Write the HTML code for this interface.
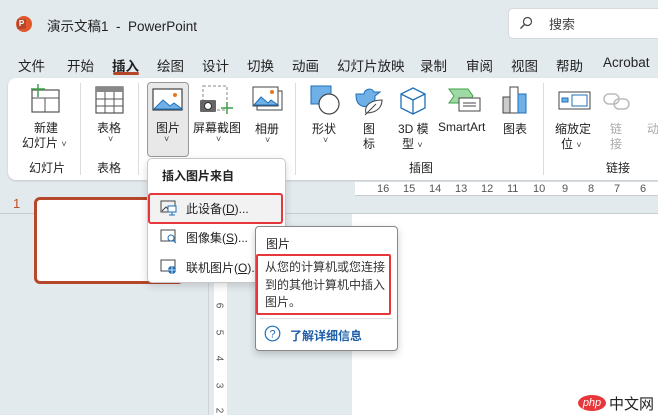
<!DOCTYPE html>
<html><head><meta charset="utf-8"><style>
*{margin:0;padding:0;box-sizing:border-box}
body{width:658px;height:415px;overflow:hidden;background:#e3eaee;font-family:"Liberation Sans","Noto Sans CJK SC",sans-serif;color:#222;position:relative}
.a{position:absolute;white-space:nowrap}
.t{font-size:13px}
.s{font-size:12px}
.sep{position:absolute;width:1px;background:#dcdcdc}
.chev{font-size:9px;color:#444}
.rn{position:absolute;top:0;font-size:11px;color:#555;line-height:14px}
</style></head><body>
<div class="a" style="left:16px;top:16px;width:16px;height:16px;border-radius:50%;background:#e2572c"></div>
<div class="a" style="left:17px;top:19px;width:9px;height:10px;background:#b7472a;border-radius:1px;color:#fff;font-size:8px;font-weight:bold;line-height:10px;text-align:center">P</div>
<div class="a t" style="left:47px;top:15px;font-size:13.5px">演示文稿1&nbsp; - &nbsp;PowerPoint</div>
<div class="a" style="left:508px;top:8px;width:160px;height:31px;background:#fff;border:1px solid #d6dadd;border-radius:5px"></div>
<svg class="a" style="left:519px;top:16px" width="14" height="14"><circle cx="8.5" cy="5.5" r="4" fill="none" stroke="#444" stroke-width="1.2"/><line x1="5.5" y1="8.5" x2="1.5" y2="12.5" stroke="#444" stroke-width="1.3"/></svg>
<div class="a t" style="left:549px;top:14px;color:#444">搜索</div>
<div class="a t" style="left:18px;top:55px;font-size:13.5px">文件</div>
<div class="a t" style="left:67px;top:55px;font-size:13.5px">开始</div>
<div class="a t" style="left:112px;top:55px;font-size:13.5px;font-weight:bold">插入</div>
<div class="a" style="left:113px;top:72px;width:26px;height:3px;background:#b7472a;border-radius:2px"></div>
<div class="a t" style="left:157px;top:55px;font-size:13.5px">绘图</div>
<div class="a t" style="left:202px;top:55px;font-size:13.5px">设计</div>
<div class="a t" style="left:247px;top:55px;font-size:13.5px">切换</div>
<div class="a t" style="left:292px;top:55px;font-size:13.5px">动画</div>
<div class="a t" style="left:337px;top:55px;font-size:13.5px">幻灯片放映</div>
<div class="a t" style="left:420px;top:55px;font-size:13.5px">录制</div>
<div class="a t" style="left:466px;top:55px;font-size:13.5px">审阅</div>
<div class="a t" style="left:511px;top:55px;font-size:13.5px">视图</div>
<div class="a t" style="left:556px;top:55px;font-size:13.5px">帮助</div>
<div class="a t" style="left:603px;top:55px;font-size:13.5px">Acrobat</div>
<div class="a" style="left:8px;top:78px;width:660px;height:102px;background:#fff;border-radius:8px;box-shadow:0 1px 2px rgba(0,0,0,.15)"></div>
<div class="sep" style="left:80px;top:83px;height:92px"></div>
<div class="sep" style="left:138px;top:83px;height:92px"></div>
<div class="sep" style="left:295px;top:83px;height:92px"></div>
<div class="sep" style="left:543px;top:83px;height:92px"></div>
<svg class="a" style="left:28px;top:84px" width="34" height="30"><rect x="4" y="6" width="27" height="22" fill="#fff" stroke="#555" stroke-width="1.2"/><line x1="4" y1="14" x2="31" y2="14" stroke="#555"/><line x1="17" y1="14" x2="17" y2="28" stroke="#555"/><line x1="3" y1="5" x2="17" y2="5" stroke="#3fa14a" stroke-width="1.5"/><line x1="10" y1="-1" x2="10" y2="13" stroke="#3fa14a" stroke-width="1.5"/></svg>
<div class="a s" style="left:34px;top:119px">新建</div>
<div class="a s" style="left:22px;top:134px">幻灯片 <span class="chev">˅</span></div>
<div class="a s" style="left:29px;top:159px">幻灯片</div>
<svg class="a" style="left:94px;top:85px" width="32" height="30"><rect x="2" y="2" width="27" height="26" fill="#fff" stroke="#555" stroke-width="1.2"/><rect x="2" y="2" width="27" height="5" fill="#888"/><path d="M2 14H29M2 21H29M11 7V28M20 7V28" stroke="#555"/></svg>
<div class="a s" style="left:97px;top:119px">表格</div>
<div class="a chev" style="left:108px;top:134px">˅</div>
<div class="a s" style="left:97px;top:159px">表格</div>
<div class="a" style="left:147px;top:82px;width:42px;height:75px;background:#e8e8e8;border:1px solid #999;border-radius:4px"></div>
<svg class="a" style="left:152px;top:88px" width="32" height="24"><rect x="1" y="1" width="29" height="21" fill="#fff" stroke="#444" stroke-width="1.2"/><path d="M2 21L11 12L18 18L22 15L30 21Z" fill="#6fb0e6" stroke="#1e6fb8"/><circle cx="23" cy="7" r="2" fill="#e8761d"/></svg>
<div class="a s" style="left:156px;top:119px">图片</div>
<div class="a chev" style="left:164px;top:134px">˅</div>
<svg class="a" style="left:199px;top:84px" width="36" height="34"><rect x="4" y="2" width="24" height="24" fill="none" stroke="#888" stroke-dasharray="3,2"/><rect x="1" y="16" width="16" height="12" fill="#666" rx="1"/><circle cx="9" cy="22" r="3.5" fill="#fff" stroke="#333"/><path d="M22 24H34M28 18V30" stroke="#3fa14a" stroke-width="1.5"/></svg>
<div class="a s" style="left:193px;top:119px">屏幕截图</div>
<div class="a chev" style="left:216px;top:134px">˅</div>
<svg class="a" style="left:252px;top:86px" width="32" height="26"><rect x="5" y="5" width="25" height="19" fill="#fff" stroke="#444"/><rect x="1" y="1" width="25" height="19" fill="#fff" stroke="#444"/><path d="M2 19L9 11L16 17L19 14L26 19Z" fill="#6fb0e6" stroke="#1e6fb8"/><circle cx="20" cy="6" r="2" fill="#e8761d"/></svg>
<div class="a s" style="left:255px;top:120px">相册</div>
<div class="a chev" style="left:265px;top:135px">˅</div>
<svg class="a" style="left:310px;top:85px" width="32" height="30"><rect x="1" y="1" width="20" height="18" fill="#6fb0e6" stroke="#1e6fb8"/><circle cx="19" cy="19" r="10" fill="#fff" stroke="#444" stroke-width="1.2"/></svg>
<div class="a s" style="left:312px;top:120px">形状</div>
<div class="a chev" style="left:323px;top:135px">˅</div>
<svg class="a" style="left:354px;top:86px" width="32" height="30"><path d="M2 8H10C10 3 18 1 20 6L26 6L21 10C22 18 14 22 8 20C3 18 2 14 2 8Z" fill="#6fb0e6" stroke="#1e6fb8"/><path d="M12 27C10 20 16 14 28 14C28 22 22 27 12 27Z" fill="#fff" stroke="#444"/><path d="M11 29L22 18" stroke="#444"/></svg>
<div class="a s" style="left:363px;top:120px">图</div>
<div class="a s" style="left:363px;top:135px">标</div>
<svg class="a" style="left:399px;top:86px" width="28" height="30"><path d="M14 2L26 8V22L14 28L2 22V8Z" fill="#fff" stroke="#1e6fb8" stroke-width="1.3"/><path d="M2 8L14 14L26 8M14 14V28" fill="none" stroke="#1e6fb8" stroke-width="1.3"/></svg>
<div class="a s" style="left:398px;top:120px">3D 模</div>
<div class="a s" style="left:402px;top:135px">型 <span class="chev">˅</span></div>
<svg class="a" style="left:448px;top:88px" width="34" height="26"><path d="M1 1H20L25 8L20 15H1L6 8Z" fill="#9fd9a4" stroke="#3fa14a"/><rect x="11" y="10" width="21" height="13" fill="#fff" stroke="#444"/><path d="M15 15H28M15 18H28" stroke="#444"/></svg>
<div class="a s" style="left:438px;top:120px">SmartArt</div>
<svg class="a" style="left:501px;top:85px" width="28" height="30"><rect x="2" y="12" width="7" height="16" fill="#ccc" stroke="#444"/><rect x="9" y="2" width="8" height="26" fill="#fff" stroke="#444"/><rect x="17" y="9" width="8" height="19" fill="#6fb0e6" stroke="#1e6fb8"/></svg>
<div class="a s" style="left:503px;top:120px">图表</div>
<div class="a s" style="left:409px;top:159px">插图</div>
<svg class="a" style="left:558px;top:89px" width="34" height="22"><rect x="1" y="3" width="31" height="17" fill="#fff" stroke="#444"/><rect x="14" y="6" width="15" height="11" fill="#fff" stroke="#1e6fb8"/><rect x="4" y="9" width="6" height="4" fill="#6fb0e6" stroke="#1e6fb8"/></svg>
<div class="a s" style="left:555px;top:120px">缩放定</div>
<div class="a s" style="left:561px;top:135px">位 <span class="chev">˅</span></div>
<svg class="a" style="left:602px;top:90px" width="30" height="22"><rect x="2" y="4" width="15" height="10" rx="5" fill="none" stroke="#bbb" stroke-width="1.5"/><rect x="12" y="9" width="15" height="10" rx="5" fill="none" stroke="#bbb" stroke-width="1.5"/></svg>
<div class="a s" style="left:610px;top:120px;color:#aaa">链</div>
<div class="a s" style="left:610px;top:135px;color:#aaa">接</div>
<div class="a s" style="left:647px;top:120px;color:#aaa">动</div>
<div class="a s" style="left:606px;top:159px">链接</div>
<div class="a" style="left:355px;top:182px;width:310px;height:14px;background:#fff;border-bottom:1px solid #ccc">
<span class="rn" style="left:22px">16</span><span class="rn" style="left:48px">15</span><span class="rn" style="left:74px">14</span><span class="rn" style="left:100px">13</span><span class="rn" style="left:126px">12</span><span class="rn" style="left:152px">11</span><span class="rn" style="left:178px">10</span><span class="rn" style="left:207px">9</span><span class="rn" style="left:233px">8</span><span class="rn" style="left:259px">7</span><span class="rn" style="left:285px">6</span>
</div>
<div class="a" style="left:0;top:213px;width:658px;height:1px;background:#c8ccd0"></div>
<div class="a" style="left:352px;top:214px;width:306px;height:201px;background:#fff"></div>
<div class="a" style="left:208px;top:214px;width:1px;height:201px;background:#cfd4d8"></div>
<div class="a" style="left:214px;top:282px;width:13px;height:133px;background:#fff"></div>
<div class="a" style="left:216px;top:300px;font-size:10px;color:#555;transform:rotate(90deg)">6</div>
<div class="a" style="left:216px;top:327px;font-size:10px;color:#555;transform:rotate(90deg)">5</div>
<div class="a" style="left:216px;top:353px;font-size:10px;color:#555;transform:rotate(90deg)">4</div>
<div class="a" style="left:216px;top:380px;font-size:10px;color:#555;transform:rotate(90deg)">3</div>
<div class="a" style="left:216px;top:405px;font-size:10px;color:#555;transform:rotate(90deg)">2</div>
<div class="a" style="left:13px;top:196px;color:#c0502a;font-size:13px">1</div>
<div class="a" style="left:34px;top:197px;width:150px;height:87px;background:#fff;border:3px solid #b7472a;border-radius:6px"></div>
<div class="a" style="left:147px;top:158px;width:139px;height:125px;background:#fff;border:1px solid #c8c8c8;border-radius:5px;box-shadow:0 3px 8px rgba(0,0,0,.15)"></div>
<div class="a s" style="left:162px;top:167px;font-weight:bold">插入图片来自</div>
<div class="a" style="left:148px;top:193px;width:135px;height:31px;background:#f2f2f2;border:2px solid #e8373a;border-radius:3px"></div>
<svg class="a" style="left:160px;top:200px" width="18" height="16"><rect x="1" y="1" width="14" height="11" fill="none" stroke="#444"/><path d="M2 11L6 7L9 10" fill="none" stroke="#444"/><rect x="8" y="6" width="8" height="6" fill="#fff" stroke="#1e6fb8"/><path d="M12 12V15M9 15H15" stroke="#1e6fb8"/></svg>
<div class="a s" style="left:186px;top:200px">此设备(<u>D</u>)...</div>
<svg class="a" style="left:160px;top:229px" width="18" height="16"><rect x="1" y="1" width="14" height="11" fill="none" stroke="#444"/><circle cx="11" cy="9" r="3" fill="#fff" stroke="#1e6fb8"/><path d="M13 11L16 14" stroke="#1e6fb8"/></svg>
<div class="a s" style="left:186px;top:229px">图像集(<u>S</u>)...</div>
<svg class="a" style="left:160px;top:259px" width="18" height="16"><rect x="1" y="1" width="14" height="11" fill="none" stroke="#444"/><circle cx="12" cy="11" r="4" fill="#1e6fb8"/><path d="M8 11H16M12 7V15" stroke="#fff" stroke-width=".8"/></svg>
<div class="a s" style="left:186px;top:259px">联机图片(<u>O</u>)...</div>
<div class="a" style="left:255px;top:226px;width:143px;height:125px;background:#fff;border:1px solid #888;border-radius:4px;box-shadow:0 3px 8px rgba(0,0,0,.2)"></div>
<div class="a s" style="left:266px;top:235px">图片</div>
<div class="a" style="left:256px;top:254px;width:135px;height:61px;border:2px solid #e8373a;border-radius:2px"></div>
<div class="a" style="left:265px;top:259px;line-height:17.5px;color:#333;font-size:12px">从您的计算机或您连接<br>到的其他计算机中插入<br>图片。</div>
<div class="a" style="left:260px;top:318px;width:133px;height:1px;background:#ddd"></div>
<svg class="a" style="left:264px;top:325px" width="17" height="17"><circle cx="8.5" cy="8.5" r="7.3" fill="none" stroke="#1e6fb8" stroke-width="1.2"/><text x="8.5" y="12.5" font-size="11" text-anchor="middle" fill="#1e6fb8" font-family="Liberation Sans">?</text></svg>
<div class="a s" style="left:290px;top:327px;color:#1e5fa8;font-weight:bold">了解详细信息</div>
<div class="a" style="left:578px;top:395px;width:28px;height:16px;background:#e8373a;border-radius:50%;color:#fff;font-size:11px;font-style:italic;text-align:center;line-height:16px">php</div>
<div class="a" style="left:609px;top:393px;font-size:15px;color:#222">中文网</div>
</body></html>
